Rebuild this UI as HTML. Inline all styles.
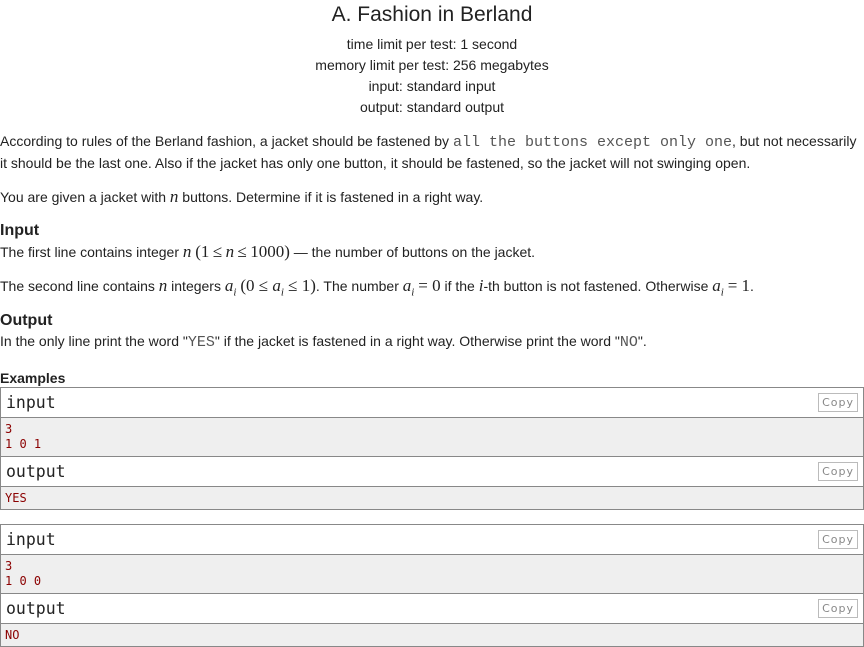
<!DOCTYPE html>
<html><head><meta charset="utf-8"><style>
body{margin:0;width:864px;height:647px;background:#fff;font-family:"Liberation Sans",Arial,sans-serif;font-size:14px;color:#222;position:relative;overflow:hidden}
.a{position:absolute;white-space:nowrap;line-height:20px}
.c{left:0;width:864px;text-align:center}
.m{font-family:"Liberation Serif",serif;font-size:17px}
.mi{font-family:"Liberation Serif",serif;font-style:italic;font-size:17px}
.tt{font-family:"Liberation Mono",monospace;color:#555;font-size:15px}
.box{position:absolute;left:0;width:862px;border:1px solid #888}
.hd{height:29px;border-bottom:1px solid #888;position:relative;font-family:"DejaVu Sans Mono",monospace;font-size:16.5px;line-height:29px;padding-left:5px;color:#222}
.bd{background:#efefef;font-family:"DejaVu Sans Mono",monospace;font-size:12px;color:#8b0000;padding:4px 4px;line-height:15px;border-bottom:1px solid #888}
.last{border-bottom:none}
.cp{position:absolute;right:5px;top:5px;border:1px solid #bbb;font-family:"DejaVu Sans",sans-serif;font-size:11px;color:#888;line-height:17px;padding:0 3px;letter-spacing:1px}
</style></head><body>
<div class="a c" style="top:3px;font-size:21px;line-height:24px">A. Fashion in Berland</div>
<div class="a c" style="top:34px">time limit per test: 1 second</div>
<div class="a c" style="top:55px">memory limit per test: 256 megabytes</div>
<div class="a c" style="top:76px">input: standard input</div>
<div class="a c" style="top:97px">output: standard output</div>
<div class="a" style="left:0;top:131px">According to rules of the Berland fashion, a jacket should be fastened by <span class="tt">all the buttons except only one</span>, but not necessarily</div>
<div class="a" style="left:0;top:153px">it should be the last one. Also if the jacket has only one button, it should be fastened, so the jacket will not swinging open.</div>
<div class="a" style="left:0;top:187px">You are given a jacket with <span class="mi">n</span> buttons. Determine if it is fastened in a right way.</div>
<div class="a" style="left:0;top:221px;font-weight:bold;font-size:16px">Input</div>
<div class="a" style="left:0;top:242px">The first line contains integer <span class="mi">n</span> <span class="m">(1&#8201;≤&#8201;<i>n</i>&#8201;≤&#8201;1000)</span> — the number of buttons on the jacket.</div>
<div class="a" style="left:0;top:276px">The second line contains <span class="mi">n</span> integers <span class="mi">a<sub style="font-size:11px">i</sub></span> <span class="m">(0 ≤ <i>a<sub style="font-size:11px">i</sub></i> ≤ 1)</span>. The number <span class="mi">a<sub style="font-size:11px">i</sub></span> <span class="m">= 0</span> if the <span class="mi">i</span>-th button is not fastened. Otherwise <span class="mi">a<sub style="font-size:11px">i</sub></span> <span class="m">= 1</span>.</div>
<div class="a" style="left:0;top:311px;font-weight:bold;font-size:16px">Output</div>
<div class="a" style="left:0;top:331px">In the only line print the word "<span class="tt">YES</span>" if the jacket is fastened in a right way. Otherwise print the word "<span class="tt">NO</span>".</div>
<div class="a" style="left:0;top:368px;font-weight:bold">Examples</div>
<div class="box" style="top:387px">
<div class="hd">input<span class="cp">Copy</span></div>
<div class="bd" style="height:30px">3<br>1 0 1</div>
<div class="hd">output<span class="cp">Copy</span></div>
<div class="bd last" style="height:14px">YES</div>
</div>
<div class="box" style="top:524px">
<div class="hd">input<span class="cp">Copy</span></div>
<div class="bd" style="height:30px">3<br>1 0 0</div>
<div class="hd">output<span class="cp">Copy</span></div>
<div class="bd last" style="height:14px">NO</div>
</div>
</body></html>
